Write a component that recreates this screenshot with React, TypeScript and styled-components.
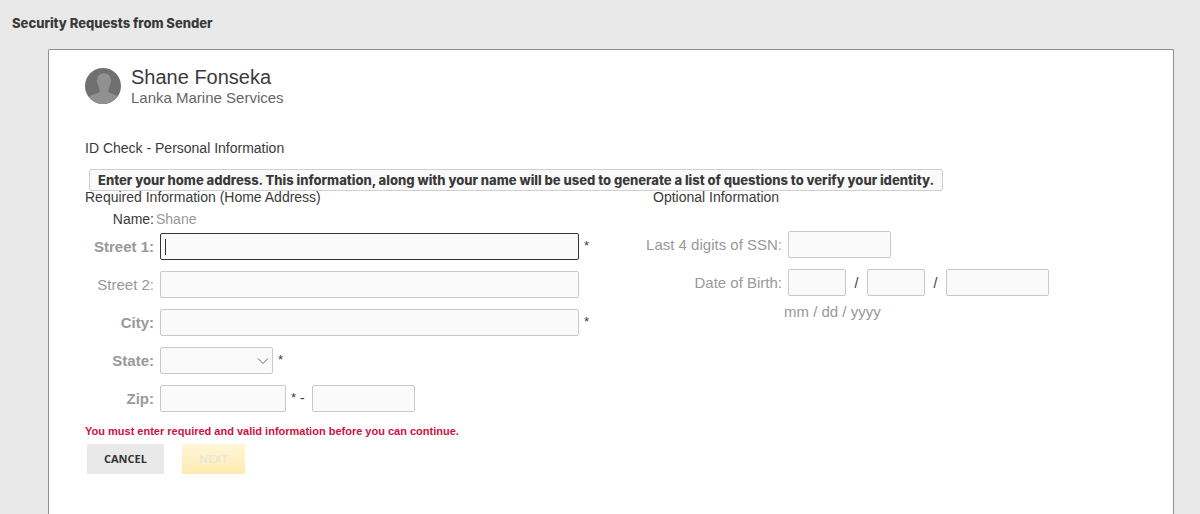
import React from "react";
import styled, { createGlobalStyle } from "styled-components";

const GlobalStyle = createGlobalStyle`
  *, *::before, *::after { box-sizing: border-box; }
  html, body, #root { min-height: 100vh; }
  body {
    margin: 0;
    background: #e9e9e9;
    color: #3a3a3a;
    font-family: "Liberation Sans", Arial, sans-serif;
    font-size: 14px;
    line-height: 18px;
  }
  #root { display: flex; flex-direction: column; }
`;

const PageTitle = styled.h1`
  margin: 0;
  padding: 14px 12px 17px;
  font-family: Inter, "Liberation Sans", sans-serif;
  font-size: 13px;
  line-height: 18px;
  font-weight: 800;
`;

const Panel = styled.main`
  flex: 1;
  margin: 0 26px 0 48px;
  padding: 16px 36px 40px;
  background: #fff;
  border: 1px solid #8f8f8f;
  border-bottom: 0;
  border-radius: 2px 2px 0 0;
`;

const Sender = styled.header`
  display: flex;
  align-items: flex-start;
  gap: 10px;
`;

const Avatar = styled.svg`
  width: 36px;
  height: 36px;
  margin-top: 2px;
`;

const SenderName = styled.div`
  font-size: 20px;
  line-height: 22px;
`;

const SenderCompany = styled.div`
  font-size: 15px;
  line-height: 20px;
  color: #666;
`;

const SectionTitle = styled.h2`
  margin: 31px 0;
  font-size: 14px;
  line-height: 18px;
  font-weight: normal;
`;

const FormArea = styled.form`
  position: relative;
`;

const Tooltip = styled.div`
  position: absolute;
  top: -19px;
  left: 4px;
  padding: 1px 8px;
  border: 1px solid #d0d0d0;
  border-radius: 2px;
  background: #fafafa;
  font-family: Inter, "Liberation Sans", sans-serif;
  font-size: 13px;
  font-weight: 800;
  line-height: 18px;
  white-space: nowrap;
`;

const Columns = styled.div`
  display: grid;
  grid-template-columns: minmax(0, 561px) minmax(0, 1fr);
`;

const Group = styled.section<{ $labels: number }>`
  display: grid;
  grid-template-columns: ${(p) => p.$labels}px minmax(0, 1fr);
  column-gap: 6px;
  align-content: start;
`;

const GroupTitle = styled.h3<{ $indent?: boolean }>`
  grid-column: 1 / -1;
  margin: 0;
  padding-left: ${(p) => (p.$indent ? 7 : 0)}px;
  font-size: 14px;
  line-height: 18px;
  font-weight: normal;
`;

const NameLabel = styled.span`
  padding: 4px 0 5px;
  text-align: right;
`;

const NameValue = styled.span`
  margin-left: -4px;
  padding: 4px 0 5px;
  font-size: 14px;
  color: #999;
`;

const Label = styled.label<{ $required?: boolean }>`
  height: 38px;
  padding-top: 5px;
  font-size: 15px;
  font-weight: ${(p) => (p.$required ? "bold" : "normal")};
  text-align: right;
  white-space: nowrap;
  color: #999;
`;

const Controls = styled.div`
  display: flex;
  align-items: flex-start;
  height: 38px;
`;

const Field = styled.input<{ $width: number }>`
  flex: 0 1 ${(p) => p.$width}px;
  min-width: 0;
  width: ${(p) => p.$width}px;
  height: 27px;
  padding: 0 5px;
  border: 1px solid #c9c9c9;
  border-radius: 2px;
  background: #fafafa;
  color: #333;
  font: inherit;
  outline: none;
`;

const ActiveField = styled(Field)`
  border-color: #333;
  background: linear-gradient(#333, #333) 4px 5px / 1px 16px no-repeat #fafafa;
  caret-color: transparent;
`;

const SelectWrap = styled.div`
  display: grid;
  flex: 0 1 113px;
`;

const StateSelect = styled.select`
  grid-area: 1 / 1;
  height: 27px;
  width: 100%;
  border: 1px solid #c9c9c9;
  border-radius: 2px;
  background: #fafafa;
  appearance: none;
  font: inherit;
`;

const Chevron = styled.svg`
  grid-area: 1 / 1;
  justify-self: end;
  align-self: center;
  width: 12px;
  height: 8px;
  margin-right: 4px;
  pointer-events: none;
`;

const Mark = styled.span`
  width: 14px;
  padding: 4px 0 0 5px;
  font-size: 13px;
  line-height: 18px;
`;

const Separator = styled.span`
  width: 21px;
  padding-top: 5px;
  text-align: center;
`;

const Dash = styled.span`
  width: 12px;
  padding-top: 4px;
`;

const OptionalSpacer = styled.div`
  grid-column: 1 / -1;
  height: 25px;
`;

const DateHint = styled.div`
  grid-column: 2;
  margin: -4px 0 0 -4px;
  font-size: 15px;
  color: #999;
`;

const ErrorText = styled.p`
  margin: 0 0 5px;
  font-size: 11px;
  line-height: 16px;
  font-weight: bold;
  color: #d0103f;
`;

const Actions = styled.div`
  display: flex;
  gap: 18px;
  padding-left: 2px;
`;

const Button = styled.button`
  height: 30px;
  padding: 0 17px;
  border: 0;
  border-radius: 1px;
  background: #e9e9e9;
  color: #333;
  font: bold 11px/30px "Open Sans", sans-serif;
`;

const NextButton = styled(Button)`
  background: linear-gradient(#fff6d9, #ffebb0);
  color: #ebe6d9;
`;

export default function App() {
  return (
    <>
      <GlobalStyle />
      <PageTitle>Security Requests from Sender</PageTitle>
      <Panel>
        <Sender>
          <Avatar viewBox="0 0 36 36" aria-hidden="true">
            <defs>
              <clipPath id="avatar-circle">
                <circle cx="18" cy="18" r="18" />
              </clipPath>
            </defs>
            <g clipPath="url(#avatar-circle)">
              <rect width="36" height="36" fill="#707070" />
              <path
                d="M19 5.500C14.500 5.500 12.300 8 12.300 12C11.500 12.300 12 15.500 13 16C13.200 18 13.800 19.500 14.500 20.500V23.500C13.500 26.500 5 25.500 2 31V36H35V31C32 25.500 24.500 26.500 23.500 23.500V20.500C24.200 19.500 24.800 18 25 16C26 15.500 26.500 12.300 25.700 12C25.700 8 23.500 5.500 19 5.500Z"
                fill="#919191"
              />
            </g>
          </Avatar>
          <div>
            <SenderName>Shane Fonseka</SenderName>
            <SenderCompany>Lanka Marine Services</SenderCompany>
          </div>
        </Sender>

        <SectionTitle>ID Check - Personal Information</SectionTitle>

        <FormArea onSubmit={(e) => e.preventDefault()}>
          <Tooltip role="tooltip">
            Enter your home address. This information, along with your name will be used to
            generate a list of questions to verify your identity.
          </Tooltip>
          <Columns>
            <Group $labels={69}>
              <GroupTitle>Required Information (Home Address)</GroupTitle>
              <NameLabel>Name:</NameLabel>
              <NameValue>Shane</NameValue>

              <Label $required htmlFor="street1">Street 1:</Label>
              <Controls>
                <ActiveField id="street1" type="text" $width={419} />
                <Mark>*</Mark>
              </Controls>

              <Label htmlFor="street2">Street 2:</Label>
              <Controls>
                <Field id="street2" type="text" $width={419} />
              </Controls>

              <Label $required htmlFor="city">City:</Label>
              <Controls>
                <Field id="city" type="text" $width={419} />
                <Mark>*</Mark>
              </Controls>

              <Label $required htmlFor="state">State:</Label>
              <Controls>
                <SelectWrap>
                  <StateSelect id="state" defaultValue="">
                    <option value="" />
                  </StateSelect>
                  <Chevron viewBox="0 0 12 8" aria-hidden="true">
                    <path d="M1 1.500L6 6.500L11 1.500" fill="none" stroke="#666" />
                  </Chevron>
                </SelectWrap>
                <Mark>*</Mark>
              </Controls>

              <Label $required htmlFor="zip">Zip:</Label>
              <Controls>
                <Field id="zip" type="text" $width={126} />
                <Mark>*</Mark>
                <Dash>-</Dash>
                <Field aria-label="Zip extension" type="text" $width={103} />
              </Controls>
            </Group>

            <Group $labels={136}>
              <GroupTitle $indent>Optional Information</GroupTitle>
              <OptionalSpacer />
              <Label htmlFor="ssn">Last 4 digits of SSN:</Label>
              <Controls>
                <Field id="ssn" type="text" $width={103} />
              </Controls>

              <Label htmlFor="month">Date of Birth:</Label>
              <Controls>
                <Field id="month" type="text" $width={58} />
                <Separator>/</Separator>
                <Field aria-label="Day" type="text" $width={58} />
                <Separator>/</Separator>
                <Field aria-label="Year" type="text" $width={103} />
              </Controls>
              <DateHint>mm / dd / yyyy</DateHint>
            </Group>
          </Columns>

          <ErrorText>You must enter required and valid information before you can continue.</ErrorText>
          <Actions>
            <Button type="button">CANCEL</Button>
            <NextButton type="submit" disabled>NEXT</NextButton>
          </Actions>
        </FormArea>
      </Panel>
    </>
  );
}
